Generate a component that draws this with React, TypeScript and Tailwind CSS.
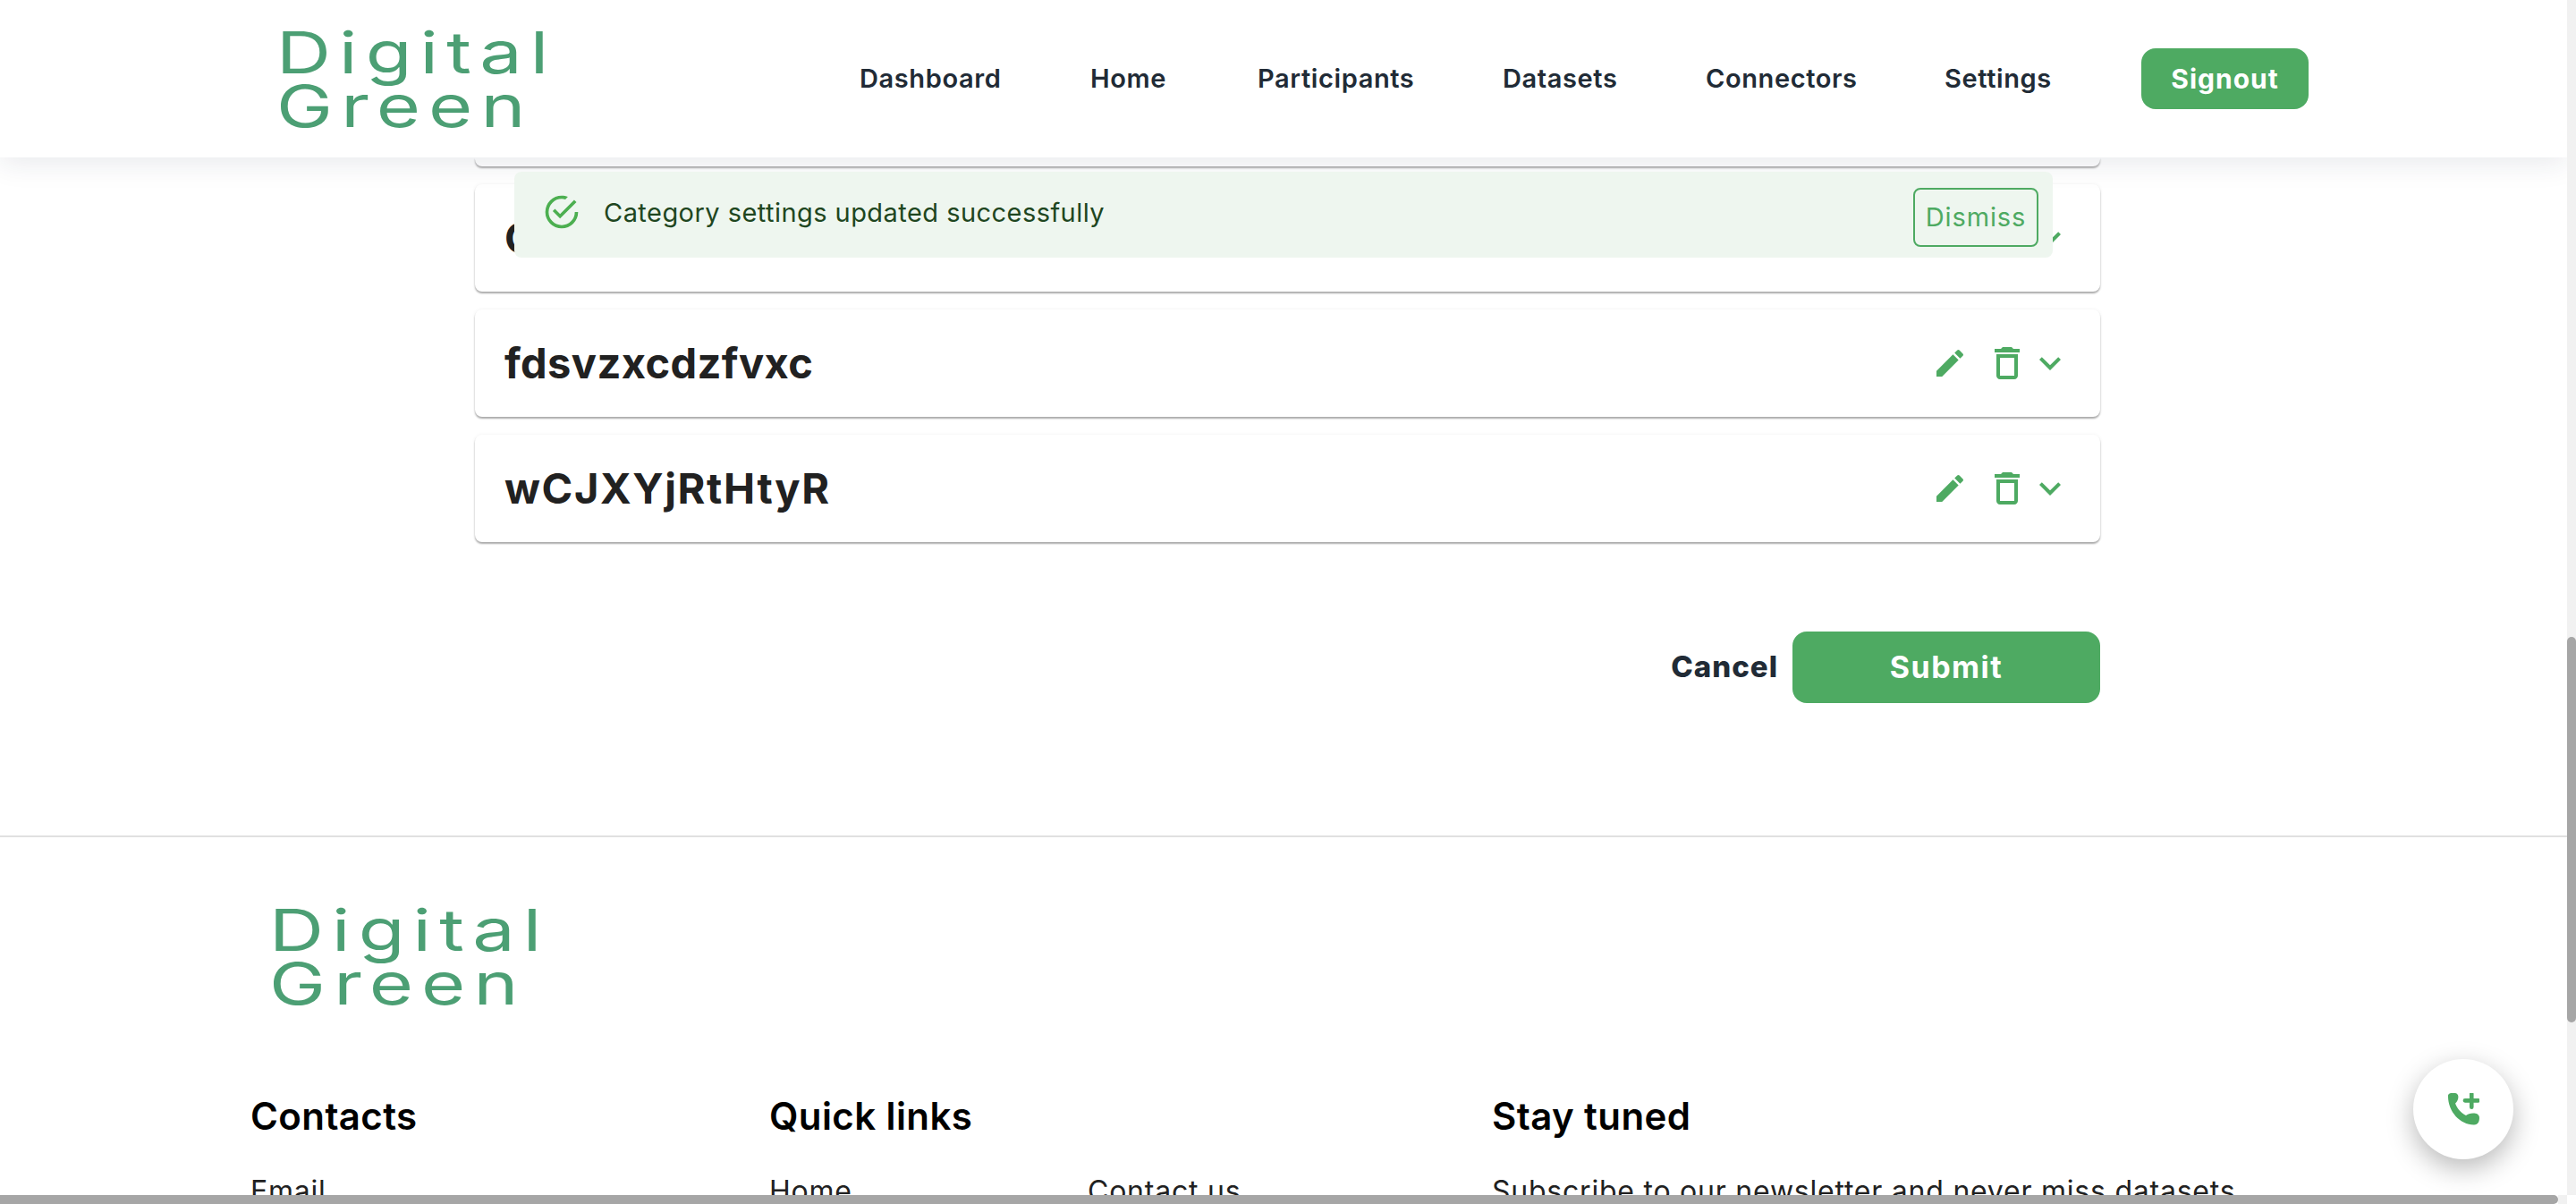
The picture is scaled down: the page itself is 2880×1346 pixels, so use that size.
import React from 'react';

const navLinks = [
  { label: 'Dashboard', width: 'w-[158px]' },
  { label: 'Home', width: 'w-[87px]' },
  { label: 'Participants', width: 'w-[174px]' },
  { label: 'Datasets', width: 'w-[127px]' },
  { label: 'Connectors', width: 'w-[167px]' },
  { label: 'Settings', width: 'w-[120px]' },
];

const Logo: React.FC<{ className?: string }> = ({ className }) => (
  <div className={`w-[300px] h-[110px] origin-left scale-x-[1.3] text-[65px] leading-[60px] font-normal text-[#4c9f74] ${className ?? ''}`}>
    <div className="tracking-[7px] -mt-[4px]">Digital</div>
    <div className="tracking-[7px]">Green</div>
  </div>
);

const EditIcon = () => (
  <svg viewBox="0 0 24 24" className="w-10 h-10 fill-[#4eaa62] shrink-0">
    <path d="M3 17.25V21h3.75L17.81 9.94l-3.75-3.75L3 17.25zM20.71 7.04c.39-.39.39-1.02 0-1.41l-2.34-2.34a.9959.9959 0 0 0-1.41 0l-1.83 1.83 3.75 3.75 1.83-1.83z" />
  </svg>
);

const TrashIcon = () => (
  <svg viewBox="0 0 24 24" className="w-12 h-12 fill-[#4eaa62] shrink-0">
    <path d="M6 19c0 1.1.9 2 2 2h8c1.1 0 2-.9 2-2V7H6v12zM8 9h8v10H8V9zm7.5-5l-1-1h-5l-1 1H5v2h14V4h-3.5z" />
  </svg>
);

const ChevronIcon = () => (
  <svg viewBox="0 0 24 24" className="w-12 h-12 fill-[#4eaa62] shrink-0">
    <path d="M16.59 8.59 12 13.17 7.41 8.59 6 10l6 6 6-6z" />
  </svg>
);

const CategoryCard: React.FC<{ title: string; tracking?: string }> = ({ title, tracking = 'tracking-[0.5px]' }) => (
  <div className="h-[120px] rounded-lg bg-white shadow-[0_2px_2px_rgba(0,0,0,0.32),0_0_4px_rgba(0,0,0,0.06)] flex items-center pl-[33px]">
    <span className={`text-[47px] font-bold text-[#212121] flex-1 ${tracking}`}>{title}</span>
    <div className="flex items-center mr-[32px]">
      <EditIcon />
      <div className="ml-[20px]"><TrashIcon /></div>
      <ChevronIcon />
    </div>
  </div>
);

export default function App() {
  return (
    <div className="w-[2880px] h-[1346px] overflow-hidden flex flex-col bg-white font-['Inter',sans-serif]">
      <div className="flex flex-1 min-h-0">
        <main className="relative w-[2870px] overflow-hidden">
          {/* Header */}
          <header className="relative z-10 h-[176px] bg-white shadow-[0_6px_30px_rgba(30,40,70,0.10)] flex items-center pl-[309px] pr-[289px]">
            <Logo />
            <nav className="ml-auto flex items-center gap-[100px]">
              {navLinks.map((link) => (
                <a key={link.label} className={`${link.width} text-[29px] font-semibold text-[#212b36] whitespace-nowrap tracking-[0.6px]`}>
                  {link.label}
                </a>
              ))}
              <button className="w-[187px] h-[68px] rounded-2xl bg-[#4eaa62] text-white text-[30px] font-bold tracking-[1px]">Signout</button>
            </nav>
          </header>

          {/* Categories */}
          <div className="ml-[531px] w-[1817px] flex flex-col gap-[20px]">
            <div className="h-[10px] rounded-b-lg bg-white shadow-[0_2px_2px_rgba(0,0,0,0.32)]"></div>
            <CategoryCard title="Cotton" />
            <CategoryCard title="fdsvzxcdzfvxc" tracking="tracking-[0.4px]" />
            <CategoryCard title="wCJXYjRtHtyR" tracking="tracking-[1.6px]" />
            <div className="flex justify-end items-center gap-[16px] mt-[80px]">
              <button className="text-[33px] font-extrabold text-[#212b36] tracking-[1px]">Cancel</button>
              <button className="w-[344px] h-[80px] rounded-2xl bg-[#4eaa62] text-white text-[34px] font-bold tracking-[1.5px] pb-[2px]">Submit</button>
            </div>
          </div>

          {/* Footer */}
          <footer className="mt-[148px] border-t-2 border-[#e0e0e0]">
            <Logo className="ml-[301px] mt-[78px]" />
            <div className="flex pl-[280px] mt-[103px]">
              <div className="w-[580px]">
                <h3 className="text-[42px] leading-[50px] font-semibold text-black tracking-[0.4px]">Contacts</h3>
                <p className="mt-[35px] text-[32px] text-[#212121] tracking-[0.77px]">Email</p>
              </div>
              <div className="w-[808px]">
                <h3 className="text-[42px] leading-[50px] font-semibold text-black tracking-[0.4px]">Quick links</h3>
                <div className="flex mt-[35px] text-[32px] text-[#212121] tracking-[0.77px]">
                  <span className="w-[356px]">Home</span>
                  <span>Contact us</span>
                </div>
              </div>
              <div>
                <h3 className="text-[42px] leading-[50px] font-semibold text-black tracking-[0.4px]">Stay tuned</h3>
                <p className="mt-[35px] text-[32px] text-[#212121] whitespace-nowrap tracking-[0.77px]">Subscribe to our newsletter and never miss datasets.</p>
              </div>
            </div>
          </footer>

          {/* Toast */}
          <div className="absolute z-20 left-[575px] top-[192px] w-[1720px] h-[96px] rounded-lg bg-[#eef6ef] flex items-start pl-[31px] pr-[16px] pt-[23px]">
            <svg viewBox="0 0 24 24" className="w-11 h-11 fill-[#4caf50] shrink-0">
              <path d="M20,12A8,8 0 0,1 12,20A8,8 0 0,1 4,12A8,8 0 0,1 12,4C12.76,4 13.5,4.11 14.2,4.31L15.77,2.74C14.61,2.26 13.34,2 12,2A10,10 0 0,0 2,12A10,10 0 0,0 12,22A10,10 0 0,0 22,12M7.91,10.08L6.5,11.5L11,16L21,6L19.59,4.58L11,13.17L7.91,10.08Z" />
            </svg>
            <span className="ml-[25px] mt-[1px] text-[29px] leading-[44px] text-[#1e4620] tracking-[0.45px]">Category settings updated successfully</span>
            <button className="ml-auto -mt-[5px] w-[140px] h-[66px] rounded-lg border-2 border-[#4eaa62] text-[29px] text-[#4eaa62] tracking-[0.9px]">Dismiss</button>
          </div>

          {/* Call button */}
          <button className="absolute z-20 left-[2698px] top-[1184px] w-[112px] h-[112px] rounded-full bg-white shadow-[0_10px_30px_rgba(0,0,0,0.28)] flex items-center justify-center">
            <svg viewBox="0 0 36 36" className="w-9 h-9">
              <path d="M1 2.5C1.5 .5 3.5 0 5.5 0h3c2.5 0 4 1.8 3.9 4.2-.1 3-1.2 5.5-3.3 7.3C10 15 15 22.5 21 25c2-1.8 4.5-2.6 8-2.6 4 0 6.6 1.4 6.9 4.4.2 2-.1 4.4-1 6-.8 1.6-2.6 2.6-5 2.6C14 35.4 .5 20 1 2.5z" className="fill-[#4eaa62]" />
              <path d="M20 8h16M28 0v16" className="stroke-[#4eaa62]" strokeWidth="5" strokeLinecap="round" transform="translate(1.5 1) scale(.92)" fill="none" />
            </svg>
          </button>
        </main>

        {/* Vertical scrollbar */}
        <div className="w-[10px] bg-[#f1f1f1] pt-[712px]">
          <div className="h-[431px] rounded-[5px] bg-[#a6a6a6]"></div>
        </div>
      </div>

      {/* Horizontal scrollbar */}
      <div className="h-[10px] flex shrink-0">
        <div className="w-[2860px] bg-[#a6a6a6] rounded-r-[5px]"></div>
        <div className="w-[10px] bg-[#f1f1f1]"></div>
        <div className="w-[10px] bg-white"></div>
      </div>
    </div>
  );
}
